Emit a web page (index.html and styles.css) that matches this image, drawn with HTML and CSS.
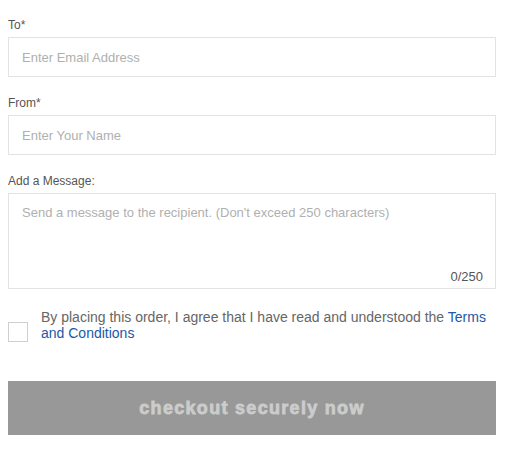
FILE: index.html
```html
<!DOCTYPE html>
<html>
<head>
<meta charset="utf-8">
<link rel="stylesheet" href="styles.css">
</head>
<body>
<form class="form">
  <div class="field">
    <label class="label">To*</label>
    <input class="input" type="text" placeholder="Enter Email Address">
  </div>
  <div class="field">
    <label class="label">From*</label>
    <input class="input" type="text" placeholder="Enter Your Name">
  </div>
  <div class="field field-last">
    <label class="label">Add a Message:</label>
    <div class="message">
      <textarea class="textarea" placeholder="Send a message to the recipient. (Don't exceed 250 characters)"></textarea>
      <span class="counter">0/250</span>
    </div>
  </div>
  <div class="agree">
    <span class="checkbox"></span>
    <p class="agree-text">By placing this order, I agree that I have read and understood the <a class="link" href="#">Terms and Conditions</a></p>
  </div>
  <button class="submit" type="button">checkout securely now</button>
</form>
</body>
</html>
```
FILE: styles.css
```css
* { box-sizing: border-box; }
html, body { margin: 0; padding: 0; background: #fff; }
body { font-family: "Liberation Sans", Arial, sans-serif; }
.form {
  width: 488px;
  margin: 0 0 0 8px;
  padding-top: 18px;
  display: flex;
  flex-direction: column;
}
.field { display: flex; flex-direction: column; margin-bottom: 19px; }
.field-last { margin-bottom: 20px; }
.label {
  font-size: 12px;
  line-height: 14px;
  color: #555;
  margin-bottom: 5px;
}
.input {
  height: 40px;
  border: 1px solid #e3e3e3;
  padding: 0 13px;
  font-family: inherit;
  font-size: 13px;
  color: #333;
  outline: none;
  margin: 0;
}
.input::placeholder, .textarea::placeholder { color: #b0b0b0; }
.message { position: relative; height: 96px; }
.textarea {
  width: 100%;
  height: 96px;
  border: 1px solid #e3e3e3;
  padding: 11px 13px;
  font-family: inherit;
  font-size: 13px;
  line-height: 16px;
  resize: none;
  outline: none;
  margin: 0;
  display: block;
}
.counter {
  position: absolute;
  right: 13px;
  bottom: 5px;
  font-size: 13px;
  line-height: 15px;
  color: #555;
}
.agree {
  display: flex;
  align-items: flex-start;
  gap: 13px;
}
.checkbox {
  width: 20px;
  height: 20px;
  margin-top: 13px;
  border: 1px solid #cfcfcf;
  flex: none;
}
.agree-text {
  margin: 0;
  font-size: 14px;
  line-height: 16px;
  color: #666;
}
.link { color: #1a5aa6; text-decoration: none; }
.submit {
  margin-top: 39px;
  height: 54px;
  border: none;
  background: #989898;
  color: #cccccc;
  font-family: "Liberation Sans", Arial, sans-serif;
  font-weight: bold;
  font-size: 18px;
  -webkit-text-stroke: 0.8px #cccccc;
  letter-spacing: 1.3px;
  padding: 0;
}
```
